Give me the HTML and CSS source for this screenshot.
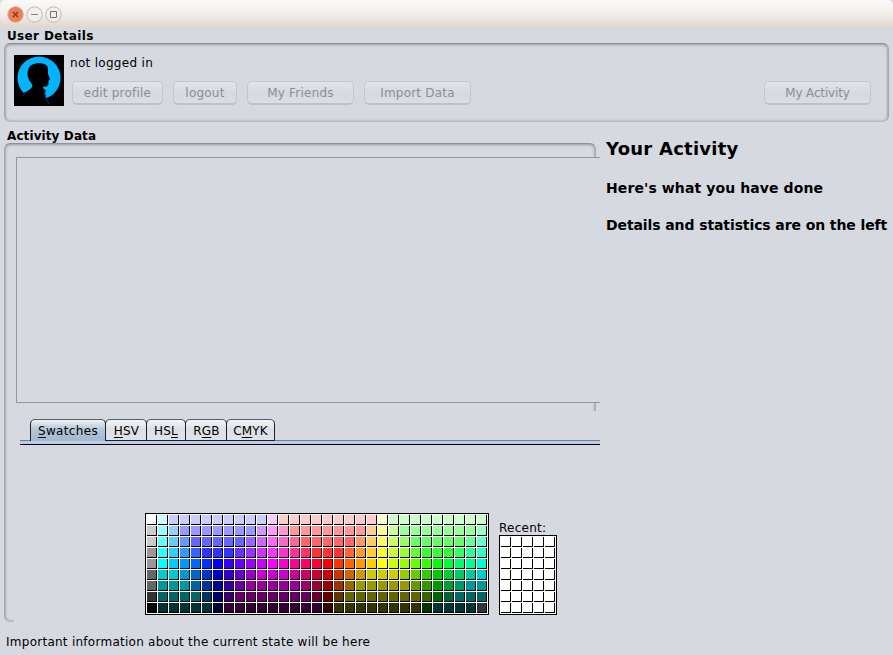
FILE: index.html
```html
<!DOCTYPE html>
<html lang="en">
<head>
<meta charset="utf-8">
<title>Activity</title>
<link rel="stylesheet" href="styles.css">
</head>
<body>
<header class="titlebar">
  <svg class="winbtn" width="17" height="17" viewBox="0 0 17 17"><circle cx="8.5" cy="8.5" r="7.7" fill="#f07c50" stroke="#cfa898"/><path d="M6 6l5 5M11 6l-5 5" stroke="#6d3a25" stroke-width="1.2"/></svg>
  <svg class="winbtn" width="17" height="17" viewBox="0 0 17 17"><circle cx="8.5" cy="8.5" r="7.7" fill="#f3f0ec" stroke="#bdb8b1"/><path d="M5 8.5h7" stroke="#8b857d"/></svg>
  <svg class="winbtn" width="17" height="17" viewBox="0 0 17 17"><circle cx="8.5" cy="8.5" r="7.7" fill="#f3f0ec" stroke="#bdb8b1"/><path d="M5.5 5.5h6v6h-6z" fill="none" stroke="#77716a"/></svg>
</header>
<section class="user">
  <h2 class="caption"><span class="t-user">User Details</span></h2>
  <div class="group user-panel">
    <svg class="avatar" width="50" height="51" viewBox="0 0 50 51"><rect width="50" height="51" fill="#000"/><circle cx="25" cy="23" r="21.5" fill="#00b4ff"/><path d="M9 38Q17 35 18.500 31Q17 27 15 25Q13 21 13.500 17Q14 9 24 8Q34 8 34 14L34 19L36 24L34.500 25.500V29Q34 32 29.500 31.500L29 33L32 36L30.500 39L32 43L33 51H2V42Z" fill="#000"/><path d="M30.500 37L32 43L35 49M9 41L11 37.500" stroke="#0b2a80" fill="none"/></svg>
    <div class="user-main">
      <div class="status"><span>not logged in</span></div>
      <div class="buttons">
        <button class="btn b1" disabled>edit profile</button>
        <button class="btn b2" disabled>logout</button>
        <button class="btn b3" disabled>My Friends</button>
        <button class="btn b3" disabled>Import Data</button>
        <button class="btn b3 last" disabled>My Activity</button>
      </div>
    </div>
  </div>
</section>
<main class="main">
  <section class="left">
    <h2 class="caption"><span class="t-act">Activity Data</span></h2>
    <div class="group data-panel">
      <div class="scroll"></div>
      <div class="chooser">
        <nav class="tabs">
          <div class="tab active w1"><span><u>S</u>watches</span></div>
          <div class="tab w2"><span><u>H</u>SV</span></div>
          <div class="tab w3"><span>HS<u>L</u></span></div>
          <div class="tab w4"><span>R<u>G</u>B</span></div>
          <div class="tab w5"><span>C<u>M</u>YK</span></div>
        </nav>
        <div class="tabline"></div>
        <div class="swatches">
          <div class="palette" id="palette"></div>
          <div class="recent-box">
            <div class="recent-label"><span>Recent:</span></div>
            <div class="palette recent" id="recent"></div>
          </div>
        </div>
      </div>
    </div>
  </section>
  <aside class="right">
    <h1><span>Your Activity</span></h1>
    <h3 class="h-done"><span>Here's what you have done</span></h3>
    <h3 class="h-left"><span>Details and statistics are on the left</span></h3>
  </aside>
</main>
<footer class="footer"><span>Important information about the current state will be here</span></footer>
<script src="swatches.js"></script>
</body>
</html>
```
FILE: styles.css
```css
* { box-sizing: border-box; }
body { margin: 0; width: 893px; height: 655px; overflow: hidden; background: #d6d9df; color: #000; font: 12px/16px "DejaVu Sans", sans-serif; display: flex; flex-direction: column; }
h1, h2, h3 { margin: 0; white-space: nowrap; }
span { white-space: nowrap; }
.titlebar { height: 28px; flex: none; display: flex; gap: 2px; padding: 6px 0 0 7px; background: linear-gradient(#fbfaf8, #f3f0ec 45%, #dfd7cf); border-radius: 5px 5px 0 0; }
.winbtn { flex: none; }
.user { flex: none; height: 99px; }
.caption { height: 15px; font-size: 12px; line-height: 17px; padding-left: 7px; font-weight: bold; }
.t-user { letter-spacing: .36px; }
.t-act { letter-spacing: .1px; }
.group { border: 1px solid #a5a8ad; border-top-color: #8e9196; border-bottom-color: #b8bbc0; border-radius: 6px; box-shadow: inset 0 1px 3px rgba(80,84,90,.35), inset 1px 0 2px rgba(80,84,90,.2), inset -1px 0 2px rgba(80,84,90,.2); }
.user-panel { margin: 0 4px; height: 79px; display: flex; padding: 11px 17px 0 9px; }
.avatar { flex: none; }
.user-main { flex: 1; padding-left: 6px; }
.status { height: 16px; letter-spacing: .3px; }
.buttons { display: flex; gap: 10px; padding: 10px 0 0 2px; }
.btn { height: 24px; padding: 0; font: 12px/20px "DejaVu Sans", sans-serif; letter-spacing: .22px; color: #8e8f91; border: 1px solid #c4c7cc; border-bottom: 2px solid #bec1c5; border-radius: 5px; background: linear-gradient(#e1e4e9, #d6d9e0 55%, #dbdee3); white-space: nowrap; }
.b1 { width: 91px; } .b2 { width: 64px; } .b3 { width: 107px; }
.last { margin-left: auto; letter-spacing: -.15px; }
.main { display: flex; height: 495px; flex: none; }
.left { width: 600px; overflow: hidden; flex: none; padding-top: 1px; }
.data-panel { margin-left: 4px; width: 592px; height: 479px; padding: 13px 0 0 9px; }
.scroll { width: 586px; margin-left: 2px; height: 246px; border: 1px solid #9297a1; border-right: 0; background: #d6d9df; }
.chooser { width: 586px; margin-top: 8px; height: 212px; background: #d6d9df; padding-top: 8px; }
.tabs { display: flex; height: 22px; padding-left: 16px; }
.tab { height: 22px; border: 1px solid #16202f; border-top-color: #555d66; border-radius: 5px 5px 0 0; background: linear-gradient(#f4f5f7, #dcdfe5 45%, #dfe2e8); text-align: center; line-height: 22px; margin-right: -1px; letter-spacing: .15px; }
.tab.active { background: linear-gradient(#eef2f6, #b5c6d7 45%, #a3b9cf); border-bottom: 0; letter-spacing: .35px; }
.tab u { text-underline-offset: 2px; }
.w1 { width: 76px; } .w2 { width: 42px; } .w3 { width: 40px; } .w4 { width: 42px; } .w5 { width: 49px; }
.w2, .w4 { padding-left: 1px; }
.tabline { height: 5px; margin: -1px 0 0 6px; border-top: 1px solid #6e7e98; border-bottom: 1px solid #000018; background: #bccde2; }
.swatches { display: flex; gap: 10px; align-items: flex-end; padding: 68px 0 0 131px; }
.palette { display: grid; grid-template-columns: repeat(31, 10px); grid-auto-rows: 10px; gap: 1px; padding: 1px; border: 1px solid #000; background: #fff; width: 344px; }
.recent { grid-template-columns: repeat(5, 10px); width: 58px; }
.cell { border-right: 1px solid #000; border-bottom: 1px solid #000; }
.recent-label { height: 16px; line-height: 18px; letter-spacing: .25px; }
.right { padding: 9px 0 0 6px; }
h1 { font-size: 18px; line-height: 26px; letter-spacing: .25px; }
h3 { font-size: 14px; line-height: 18px; }
.h-done { padding-top: 17px; letter-spacing: .1px; }
.h-left { padding-top: 19px; letter-spacing: -.1px; }
.footer { padding: 12px 0 0 6px; letter-spacing: .26px; }
```
FILE: swatches.js
```js
// Each row lists colour runs as "hex*count" in three-digit hex.
const rows = [
  "fff cff ccf*9 fcf fcc*9 ffc cfc*9",
  "ccc 9ff 9cf 99f*7 c9f f9f f9c f99*7 fc9 ff9 cf9 9f9*7 9fc",
  "ccc 6ff 6cf 69f 66f*5 96f c6f f6f f6c f69 f66*5 f96 fc6 ff6 cf6 9f6 6f6*5 6f9 6fc",
  "999 3ff 3cf 39f 36f 33f*3 63f 93f c3f f3f f3c f39 f36 f33*3 f63 f93 fc3 ff3 cf3 9f3 6f3 3f3*3 3f6 3f9 3fc",
  "999 0ff 0cf 09f 06f 03f 00f 30f 60f 90f c0f f0f f0c f09 f06 f03 f00 f30 f60 f90 fc0 ff0 cf0 9f0 6f0 3f0 0f0 0f3 0f6 0f9 0fc",
  "666 0cc*2 09c 06c 03c 00c 30c 60c 90c c0c*3 c09 c06 c03 c00 c30 c60 c90 cc0*3 9c0 6c0 3c0 0c0 0c3 0c6 0c9 0cc",
  "666 099*3 069 039 009 309 609 909*5 906 903 900 930 960 990*5 690 390 090 093 096 099*2",
  "333 066*4 036 006 306 606*7 603 600 630 660*7 360 060 063 066*3",
  "000 033*5 003 303*9 300 330*8 030 033*4 333"
];
function addCell(parent, color) {
  const cell = document.createElement("div");
  cell.className = "cell";
  cell.style.backgroundColor = color;
  parent.appendChild(cell);
}
const palette = document.getElementById("palette");
for (const row of rows) {
  for (const run of row.split(" ")) {
    const [hex, count] = run.split("*");
    for (let i = 0; i < (+count || 1); i++) addCell(palette, "#" + hex);
  }
}
const recent = document.getElementById("recent");
for (let i = 0; i < 35; i++) addCell(recent, "#fff");
```
